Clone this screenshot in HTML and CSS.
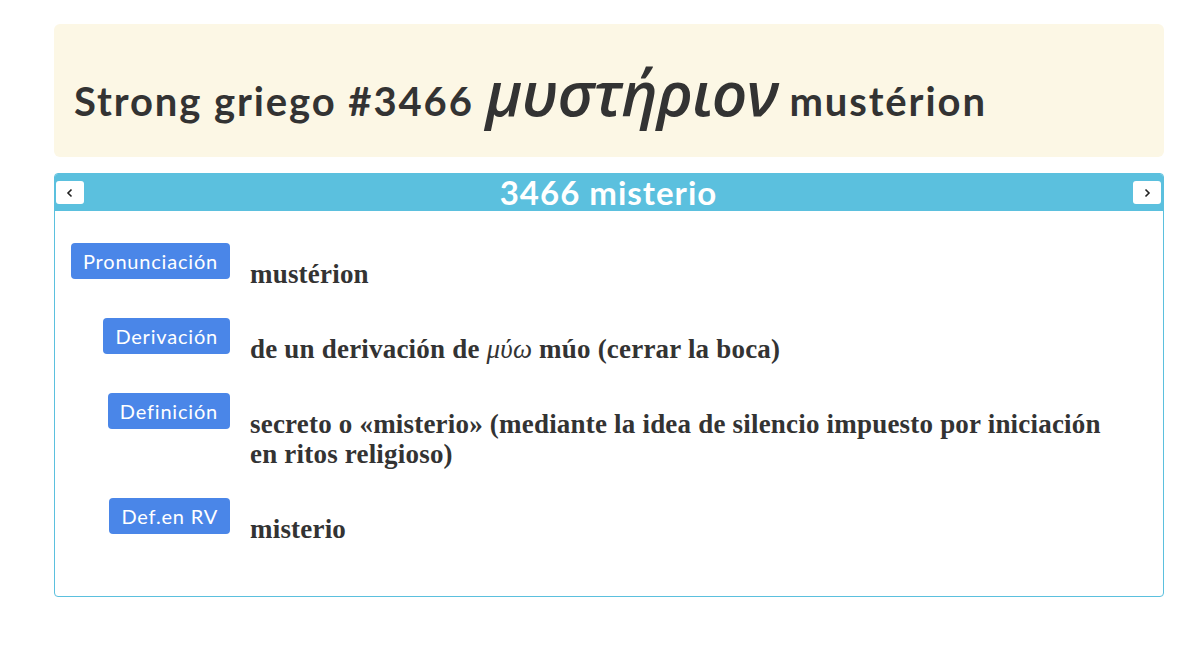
FILE: index.html
```html
<!DOCTYPE html>
<html lang="es">
<head>
    <meta charset="UTF-8">
    <meta name="viewport" content="width=device-width, initial-scale=1.0">
    <title>Strong griego #3466</title>
    <link rel="stylesheet" href="styles.css">
</head>
<body>
    <div class="pagina">
        <div class="cabecera">
            <h1>Strong griego #3466 <span class="griego">μυστήριον</span> mustérion</h1>
        </div>

        <div class="tarjeta">
            <div class="tarjeta-titulo">
                <button class="flecha" title="Anterior">
                    <svg width="8" height="10" viewBox="0 0 8 10"><path d="M5.5 1.5 L2 5 L5.5 8.5" fill="none" stroke="#222" stroke-width="1.6"/></svg>
                </button>
                <h2>3466 misterio</h2>
                <button class="flecha" title="Siguiente">
                    <svg width="8" height="10" viewBox="0 0 8 10"><path d="M2.5 1.5 L6 5 L2.5 8.5" fill="none" stroke="#222" stroke-width="1.6"/></svg>
                </button>
            </div>
            <div class="tarjeta-cuerpo">
                <div class="fila">
                    <div class="etiqueta-col"><span class="etiqueta">Pronunciación</span></div>
                    <div class="texto">mustérion</div>
                </div>
                <div class="fila">
                    <div class="etiqueta-col"><span class="etiqueta">Derivación</span></div>
                    <div class="texto">de un derivación de <i class="gr">μύω</i> múo (cerrar la boca)</div>
                </div>
                <div class="fila">
                    <div class="etiqueta-col"><span class="etiqueta">Definición</span></div>
                    <div class="texto">secreto o «misterio» (mediante la idea de silencio impuesto por iniciación en ritos religioso)</div>
                </div>
                <div class="fila">
                    <div class="etiqueta-col"><span class="etiqueta">Def.en RV</span></div>
                    <div class="texto">misterio</div>
                </div>
            </div>
        </div>
    </div>
</body>
</html>
```

FILE: styles.css
```css
body {
    margin: 0;
    background: #fff;
    color: #333;
    font-family: 'Lato', sans-serif;
}
.pagina {
    width: 1110px;
    padding: 24px 0 40px 54px;
}
.cabecera {
    background-color: #fcf7e5;
    border-radius: 6px;
    height: 133px;
    padding: 0 20px;
    display: flex;
    align-items: center;
    box-sizing: border-box;
}
.cabecera h1 {
    margin: 0;
    padding-top: 2px;
    font-size: 40px;
    font-weight: 700;
    color: #333;
    letter-spacing: 1.9px;
}
.griego {
    font-family: 'Open Sans', sans-serif;
    font-style: italic;
    font-weight: 600;
    font-size: 62px;
    letter-spacing: -1px;
}
.tarjeta {
    margin-top: 16px;
    border: 1px solid #5bc0de;
    border-radius: 4px;
    overflow: hidden;
}
.tarjeta-titulo {
    background-color: #5bc0de;
    height: 37px;
    display: flex;
    align-items: center;
    justify-content: space-between;
    padding: 0 2px 0 1px;
}
.tarjeta-titulo h2 {
    margin: 0;
    color: #fff;
    font-size: 33px;
    font-weight: 700;
    letter-spacing: 1px;
    line-height: 37px;
}
.flecha {
    width: 28px;
    height: 23px;
    background: #fff;
    border: none;
    border-radius: 3px;
    padding: 0;
    display: flex;
    align-items: center;
    justify-content: center;
    cursor: pointer;
}
.tarjeta-cuerpo {
    padding: 32px 15px 52px 15px;
}
.fila {
    display: flex;
    gap: 20px;
    margin-bottom: 29px;
}
.fila:last-child {
    margin-bottom: 0;
}
.etiqueta-col {
    width: 160px;
    flex-shrink: 0;
    text-align: right;
}
.etiqueta {
    display: inline-block;
    background-color: #4a86e8;
    color: #fff;
    font-size: 20px;
    letter-spacing: 0.8px;
    line-height: 36px;
    padding: 0 12px;
    border-radius: 4px;
}
.texto {
    padding-top: 16px;
    font-family: 'Liberation Serif', serif;
    font-weight: 700;
    font-size: 27px;
    letter-spacing: 0.2px;
    line-height: 30px;
    color: #333;
    max-width: 880px;
}
.gr {
    font-weight: 400;
}
```
